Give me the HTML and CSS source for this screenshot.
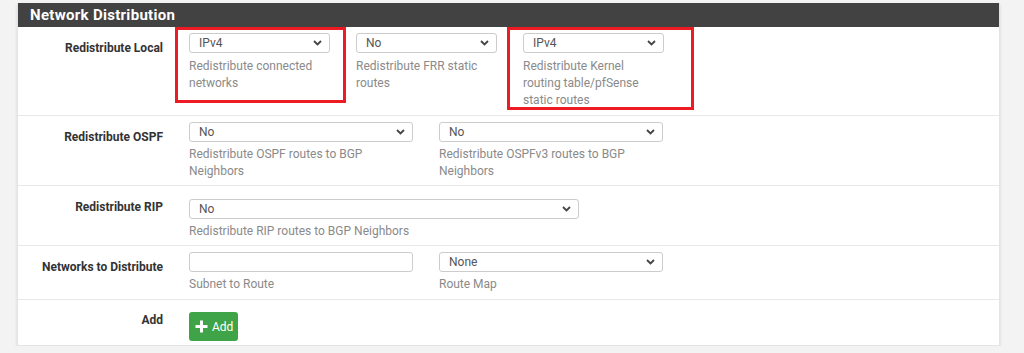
FILE: index.html
```html
<!DOCTYPE html>
<html lang="en">
<head>
    <meta charset="UTF-8" />
    <title>Network Distribution</title>
    <link rel="stylesheet" href="styles.css">
</head>
<body>
    <div class="panel">
        <div class="panel_heading">Network Distribution</div>

        <div class="form_row first_row">
            <div class="row_label">Redistribute Local</div>
            <div class="row_fields">
                <div class="field col_2">
                    <div class="select"><span>IPv4</span><svg width="9" height="6" viewBox="0 0 9 6"><path d="M1 1l3.5 3.5L8 1" fill="none" stroke="#444" stroke-width="1.8"/></svg></div>
                    <p class="help">Redistribute connected networks</p>
                </div>
                <div class="field col_2">
                    <div class="select"><span>No</span><svg width="9" height="6" viewBox="0 0 9 6"><path d="M1 1l3.5 3.5L8 1" fill="none" stroke="#444" stroke-width="1.8"/></svg></div>
                    <p class="help">Redistribute FRR static routes</p>
                </div>
                <div class="field col_2">
                    <div class="select"><span>IPv4</span><svg width="9" height="6" viewBox="0 0 9 6"><path d="M1 1l3.5 3.5L8 1" fill="none" stroke="#444" stroke-width="1.8"/></svg></div>
                    <p class="help">Redistribute Kernel routing table/pfSense static routes</p>
                </div>
            </div>
            <!-- annotation boxes drawn over the screenshot -->
            <div class="mark mark_one"></div>
            <div class="mark mark_two"></div>
        </div>

        <div class="form_row">
            <div class="row_label">Redistribute OSPF</div>
            <div class="row_fields">
                <div class="field col_3">
                    <div class="select"><span>No</span><svg width="9" height="6" viewBox="0 0 9 6"><path d="M1 1l3.5 3.5L8 1" fill="none" stroke="#444" stroke-width="1.8"/></svg></div>
                    <p class="help">Redistribute OSPF routes to BGP Neighbors</p>
                </div>
                <div class="field col_3">
                    <div class="select"><span>No</span><svg width="9" height="6" viewBox="0 0 9 6"><path d="M1 1l3.5 3.5L8 1" fill="none" stroke="#444" stroke-width="1.8"/></svg></div>
                    <p class="help">Redistribute OSPFv3 routes to BGP Neighbors</p>
                </div>
            </div>
        </div>

        <div class="form_row spaced_row">
            <div class="row_label">Redistribute RIP</div>
            <div class="row_fields">
                <div class="field col_5">
                    <div class="select"><span>No</span><svg width="9" height="6" viewBox="0 0 9 6"><path d="M1 1l3.5 3.5L8 1" fill="none" stroke="#444" stroke-width="1.8"/></svg></div>
                    <p class="help">Redistribute RIP routes to BGP Neighbors</p>
                </div>
            </div>
        </div>

        <div class="form_row networks_row">
            <div class="row_label">Networks to Distribute</div>
            <div class="row_fields">
                <div class="field col_3">
                    <div class="input"></div>
                    <p class="help">Subnet to Route</p>
                </div>
                <div class="field col_3">
                    <div class="select"><span>None</span><svg width="9" height="6" viewBox="0 0 9 6"><path d="M1 1l3.5 3.5L8 1" fill="none" stroke="#444" stroke-width="1.8"/></svg></div>
                    <p class="help">Route Map</p>
                </div>
            </div>
        </div>

        <div class="form_row last_row">
            <div class="row_label">Add</div>
            <div class="row_fields">
                <button class="btn_add" type="button">
                    <svg width="13" height="13" viewBox="0 0 13 13"><path d="M6.5 0.5v12M0.5 6.5h12" stroke="#fff" stroke-width="3"/></svg>
                    <span>Add</span>
                </button>
            </div>
        </div>
    </div>
</body>
</html>
```

FILE: styles.css
```css
* {
    margin: 0;
    padding: 0;
    box-sizing: border-box;
    font-family: Roboto, "Liberation Sans", sans-serif;
}

body {
    background: #f3f3f3;
    padding: 3px 24px 0 17px;
}

/* Panel */
.panel {
    width: 983px;
    background: #ffffff;
    border: 1px solid #e4e4e4;
    border-top: none;
    box-shadow: 0 2px 3px rgba(0, 0, 0, 0.12);
}

.panel_heading {
    height: 24px;
    background: #424242;
    color: #ffffff;
    font-size: 15px;
    font-weight: 700;
    letter-spacing: 0.3px;
    line-height: 24px;
    padding-left: 12px;
}

/* Rows */
.form_row {
    position: relative;
    display: flex;
    padding: 6px 0 5px 0;
    border-bottom: 1px solid #e8e8e8;
}

.first_row,
.networks_row {
    padding-bottom: 6px;
}

.spaced_row {
    padding-top: 13px;
}

.last_row {
    border-bottom: none;
    padding: 12px 0 4px 0;
}

.row_label {
    width: 145px;
    flex-shrink: 0;
    text-align: right;
    font-size: 12px;
    font-weight: 700;
    color: #333333;
    padding-top: 7px;
    line-height: 16px;
}

.spaced_row .row_label,
.last_row .row_label {
    padding-top: 0;
}

.row_fields {
    display: flex;
    gap: 26px;
    margin-left: 26px;
}

.col_2 {
    width: 141px;
}

.col_3 {
    width: 224px;
}

.col_5 {
    width: 390px;
}

/* Controls */
.select,
.input {
    height: 20px;
    border: 1px solid #cccccc;
    border-radius: 3px;
    background: #ffffff;
}

.select {
    display: flex;
    justify-content: space-between;
    align-items: center;
    padding: 0 7px 0 9px;
    font-size: 12px;
    color: #555555;
}

.help {
    font-size: 12px;
    line-height: 17px;
    color: #8a8a8a;
    margin-top: 4px;
}

.first_row .help {
    margin-top: 5px;
}

.btn_add {
    display: flex;
    align-items: center;
    gap: 4px;
    width: 49px;
    height: 29px;
    padding: 0 0 0 6px;
    border: none;
    border-radius: 3px;
    background: #3fa348;
    color: #ffffff;
    font-size: 12px;
}

/* Red annotation boxes */
.mark {
    position: absolute;
    top: 0;
    border: 3px solid #ed1c24;
}

.mark_one {
    left: 157px;
    width: 171px;
    height: 76px;
}

.mark_two {
    left: 489px;
    width: 187px;
    height: 83px;
}
```
